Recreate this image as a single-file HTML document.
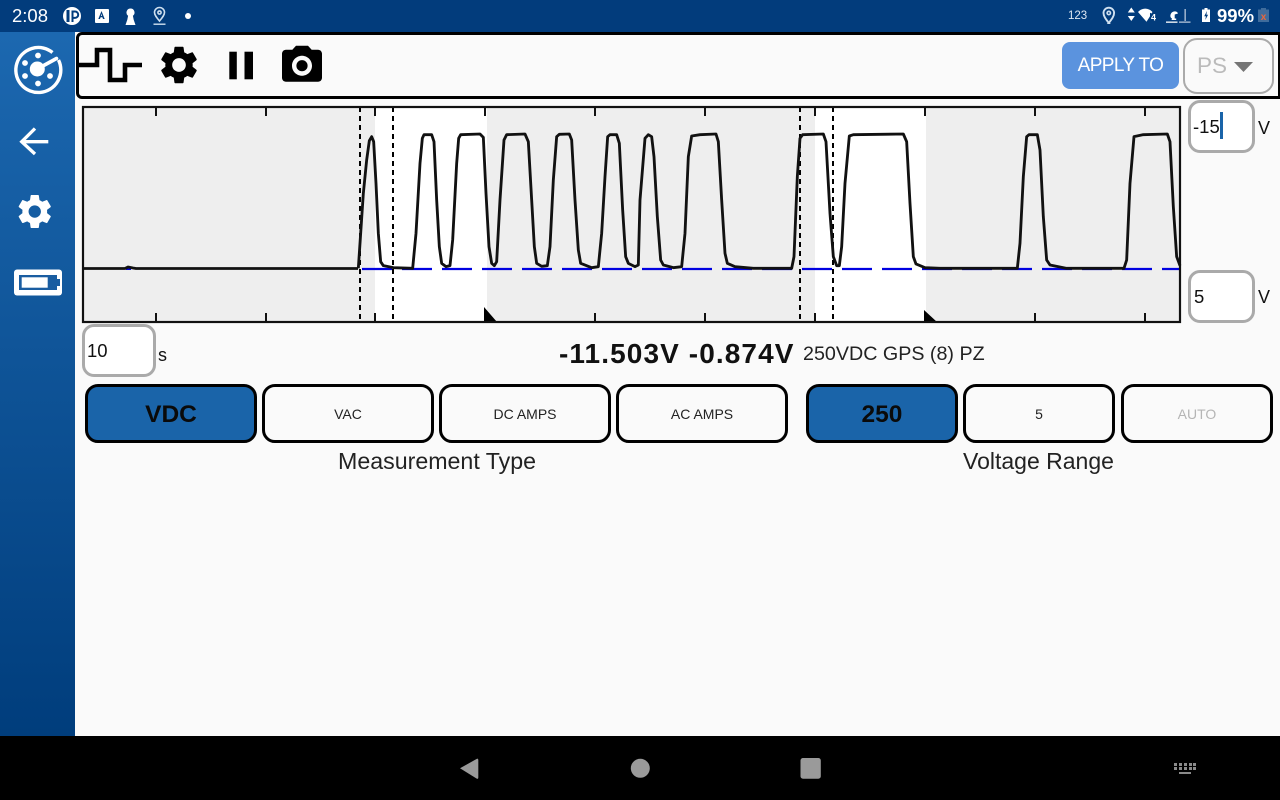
<!DOCTYPE html>
<html><head><meta charset="utf-8"><style>
html,body{margin:0;padding:0;width:1280px;height:800px;overflow:hidden;background:#fafafa}
body{position:relative;font-family:"Liberation Sans",sans-serif;color:#111}
.a{position:absolute;box-sizing:border-box}
.t{position:absolute;white-space:nowrap;line-height:30px;height:30px}
.b{position:absolute;box-sizing:border-box;top:384px;height:59px;border:3px solid #000;border-radius:13px;background:#fafafa;text-align:center;line-height:54px;font-size:14px;color:#222}
.on{background:#1a64a9;font-weight:bold;font-size:24.500px;line-height:55px;color:#0a0a0a}
.i{position:absolute;box-sizing:border-box;background:#fff;border:3px solid #aaa;border-radius:12px}
svg{position:absolute;left:0;top:0}
</style></head><body>
<div class="a" style="left:0;top:0;width:1280px;height:32px;background:#023c7c"></div>
<div class="a" style="left:0;top:32px;width:75px;height:704px;background:linear-gradient(#1c68b0,#003d7c)"></div>
<div class="a" style="left:0;top:736px;width:1280px;height:64px;background:#000"></div>
<div class="a" style="left:76px;top:32px;width:1204px;height:67px;border:3px solid #000;border-right-width:2px;border-radius:6px 0 0 6px;background:#fafafa"></div>
<div class="a" style="left:1062px;top:42px;width:117px;height:47px;background:#5b93de;border-radius:8px;color:#fff;font-size:19px;line-height:48px;text-align:center;letter-spacing:-.6px">APPLY TO</div>
<div class="a" style="left:1183px;top:38px;width:91px;height:56px;border:2.500px solid #aaa;border-radius:14px"></div>
<div class="t" style="left:1197px;top:51px;font-size:22.500px;color:#bbb">PS</div>

<div class="a" style="left:82px;top:106px;width:1099px;height:217px;background:#eee"></div>
<div class="a" style="left:375px;top:106px;width:112px;height:217px;background:#fff"></div>
<div class="a" style="left:815px;top:106px;width:111px;height:217px;background:#fff"></div>

<svg width="1280" height="800" viewBox="0 0 1280 800">
<!-- status bar -->
<g fill="#fff">
<circle cx="72" cy="16" r="9"/>
<rect x="66.500" y="10" width="3" height="12" fill="#023c7c"/><path d="M72.500 22V11.500h2.500a3.200 3.200 0 0 1 0 6.400H72.500" fill="none" stroke="#023c7c" stroke-width="2"/>
<rect x="95" y="9" width="14" height="14" rx="1"/>
<path d="M101.500 11l-3.200 8h1.700l.6-1.700h1.800l.6 1.700h1.700l-3.200-8zm0 2.800l.6 2.100h-1.200z" fill="#023c7c"/>
<path d="M130.500 8.500a4 4 0 0 1 2.400 7.200l.8 4 1.800 5.300h-10l1.800-5.300.8-4a4 4 0 0 1 2.400-7.200z"/>
<circle cx="188" cy="16" r="3"/>
</g>
<g fill="none" stroke="#cfe0f0" stroke-width="1.600">
<path d="M159.500 21c-3-3.500-5-6-5-8.500a5 5 0 0 1 10 0c0 2.500-2 5-5 8.500z"/><circle cx="159.500" cy="12.500" r="1.600"/><path d="M153.500 24.200h12" stroke-width="1.400"/>
<path d="M1108.800 23c-3.300-4.300-5.300-7-5.300-10a5.300 5.300 0 0 1 10.600 0c0 3-2 5.700-5.300 10z" stroke-width="1.900"/><circle cx="1108.800" cy="13" r="1.700"/>
</g>
<g fill="#fff">
<path d="M1131.300 7.500l3.500 5h-7zM1131.300 21l-3.500-5h7z"/>
<path d="M1138 12c4-4.500 10.500-4.500 14.500 0l-1 1.500-1.500-.8v3.500l-3.500 5.500z"/>
<text x="1151" y="20.500" font-size="9" font-weight="bold" font-family="Liberation Sans">4</text>
<path d="M1172 18.500c-2.500-1-2-5 .5-6.500 2.500-1.300 5-.5 5.500 1.500l-3.300 1v4h1.500v1.500h-4.700z"/>
<path d="M1166 21.500h11.500v1.300H1166z"/>
<path d="M1184.500 9h1.300v12h-1.300zM1179 21.500h11.500v1.200H1179z" fill="#b9c9dc"/>
<path d="M1202 9.500h2.500V8h3v1.500h2.500V22h-8z"/>
</g>
<path d="M1207 11l-2.800 5.300h1.700l-.6 3.700 2.800-5.300h-1.700z" fill="#023c7c"/>
<rect x="1258" y="9.500" width="11" height="12.500" fill="#3f6c9c"/><rect x="1261" y="8" width="5" height="2" fill="#3f6c9c"/>
<text x="1260.800" y="20" font-size="10" font-weight="bold" fill="#e8673c" font-family="Liberation Sans">x</text>

<!-- sidebar logo -->
<g fill="#fff" stroke="none">
<path d="M52.500 52.500A22.500 22.500 0 1 0 58.500 60" fill="none" stroke="#fff" stroke-width="3.400"/>
<circle cx="37.300" cy="69" r="7.500"/>
<path d="M37.300 69L56.500 58.500" stroke="#fff" stroke-width="3.600" stroke-linecap="round"/>
<circle cx="38" cy="55.500" r="2.900"/><circle cx="25" cy="63" r="2.900"/><circle cx="25" cy="76" r="2.900"/><circle cx="38" cy="83.500" r="2.900"/><circle cx="50" cy="76" r="2.900"/>
</g>
<path d="M48.300 141.700H22.500M35 128.500L21.700 141.700 35 154" fill="none" stroke="#fff" stroke-width="3.300"/>
<path transform="translate(14.100 190.900) scale(1.720)" fill="#fff" d="M19.140 12.940c.04-.3.06-.61.06-.94 0-.32-.02-.64-.07-.94l2.030-1.580c.18-.14.23-.41.12-.61l-1.920-3.320c-.12-.22-.37-.29-.59-.22l-2.390.96c-.5-.38-1.030-.7-1.620-.94l-.36-2.540c-.04-.24-.24-.41-.48-.41h-3.840c-.24 0-.43.17-.47.41l-.36 2.540c-.59.24-1.130.57-1.620.94l-2.390-.96c-.22-.08-.47 0-.59.22L2.740 8.870c-.12.21-.08.47.12.61l2.030 1.580c-.05.3-.09.63-.09.94s.02.64.07.94l-2.030 1.580c-.18.14-.23.41-.12.61l1.920 3.320c.12.22.37.29.59.22l2.390-.96c.5.38 1.030.7 1.620.94l.36 2.540c.05.24.24.41.48.41h3.840c.24 0 .44-.17.47-.41l.36-2.540c.59-.24 1.130-.56 1.620-.94l2.390.96c.22.08.47 0 .59-.22l1.920-3.320c.12-.22.07-.47-.12-.61l-2.010-1.580zM12 15.600c-1.980 0-3.600-1.620-3.600-3.600s1.620-3.600 3.600-3.600 3.600 1.620 3.600 3.600-1.620 3.600-3.600 3.600z"/>
<rect x="14" y="269.500" width="48" height="26" rx="3" fill="#fff"/>
<rect x="19" y="275" width="38" height="15" fill="#1a5da1"/>
<rect x="21.700" y="277.300" width="26" height="10.400" fill="#fff"/>
<rect x="57" y="279" width="3" height="7" fill="#1a5da1"/>

<!-- toolbar icons -->
<path d="M77 65H97V50H110V80H125V65H142" fill="none" stroke="#000" stroke-width="4.600"/>
<path transform="translate(156.200 42.200) scale(1.900)" fill="#000" d="M19.140 12.940c.04-.3.06-.61.06-.94 0-.32-.02-.64-.07-.94l2.030-1.580c.18-.14.23-.41.12-.61l-1.920-3.320c-.12-.22-.37-.29-.59-.22l-2.390.96c-.5-.38-1.030-.7-1.620-.94l-.36-2.540c-.04-.24-.24-.41-.48-.41h-3.840c-.24 0-.43.17-.47.41l-.36 2.540c-.59.24-1.130.57-1.620.94l-2.390-.96c-.22-.08-.47 0-.59.22L2.740 8.870c-.12.21-.08.47.12.61l2.030 1.580c-.05.3-.09.63-.09.94s.02.64.07.94l-2.030 1.580c-.18.14-.23.41-.12.61l1.920 3.320c.12.22.37.29.59.22l2.390-.96c.5.38 1.030.7 1.620.94l.36 2.540c.05.24.24.41.48.41h3.840c.24 0 .44-.17.47-.41l.36-2.540c.59-.24 1.130-.56 1.620-.94l2.390.96c.22.08.47 0 .59-.22l1.920-3.320c.12-.22.07-.47-.12-.61l-2.010-1.580zM12 15.600c-1.980 0-3.600-1.620-3.600-3.600s1.620-3.600 3.600-3.600 3.600 1.620 3.600 3.600-1.620 3.600-3.600 3.600z"/>
<rect x="229.300" y="51.700" width="7.500" height="27.600" fill="#000"/><rect x="244.500" y="51.700" width="8.500" height="27.600" fill="#000"/>
<g transform="translate(278 41.700) scale(2)" fill="#000"><circle cx="12" cy="12" r="2.800"/><path d="M9 2L7.170 4H4c-1.100 0-2 .9-2 2v12c0 1.100.9 2 2 2h16c1.100 0 2-.9 2-2V6c0-1.100-.9-2-2-2h-3.170L15 2H9zm3 15c-2.760 0-5-2.240-5-5s2.240-5 5-5 5 2.240 5 5-2.240 5-5 5z"/></g>
<path d="M1234 62h19l-9.500 10z" fill="#757575"/>

<!-- chart -->
<path d="M362 269H1180" stroke="#0000e0" stroke-width="2.200" stroke-dasharray="30 10" fill="none"/>
<path d="M126 269H131" stroke="#0000e0" stroke-width="2"/>
<g stroke="#111" stroke-width="2" fill="none">
<path d="M156 107v9M266 107v9M375 107v9M485 107v9M595 107v9M705 107v9M815 107v9M925 107v9M1035 107v9M1145 107v9M156 322v-9M266 322v-9M375 322v-9M485 322v-9M595 322v-9M705 322v-9M815 322v-9M925 322v-9M1035 322v-9M1145 322v-9"/>
<path d="M360 107V322M393 107V322M800 107V322M833 107V322" stroke="#000" stroke-dasharray="5 4"/>
</g>
<path d="M484 307V322H497zM924 310V322H937z" fill="#000"/>
<g fill="none" stroke="#111" stroke-linejoin="round">
<path stroke-width="2.800" d="M83 268.500H125L128 267 133 268 136 268.500H358"/>
<g transform="translate(340 100) scale(.33333)" stroke-width="8.500">
<path d="M55 505L62 400 70 280 80 180 88 122 95 110 101 125 108 250 115 400 122 485 130 497 160 503 218 505 228 400 240 190 247 115 252 104 275 104 282 125 290 300 298 440 305 490 318 500 330 497 338 420 350 190 356 115 362 104 420 102 430 112 438 280 447 440 455 490 463 497 470 485 480 300 492 120 500 104 555 102 565 125 575 300 583 440 590 490 605 499 622 497 630 440 640 240 650 110 658 103 688 102 695 120 705 300 715 450 722 490 755 503 775 500 785 400 795 230 803 110 810 104 830 104 838 130 848 330 857 470 865 490 885 500 895 495 900 300 915 115 925 104 935 110 942 170 952 350 962 480 970 495 1000 503 1025 500 1035 400 1045 170 1055 108 1080 104 1128 102 1135 125 1145 300 1155 460 1162 490 1185 500 1240 505 1355 505 1362 470 1372 230 1380 115 1388 104 1450 102 1458 125 1470 340 1480 470 1490 497 1498 497 1505 440 1515 250 1528 108 1540 104 1690 102 1700 125 1710 310 1720 470 1728 492 1755 503 1800 505 1820 505 2032 505 2040 430 2050 230 2060 110 2067 104 2092 104 2100 150 2110 350 2120 480 2130 495 2180 505 2352 505 2360 480 2370 250 2382 110 2410 104 2482 102 2490 125 2500 320 2510 470 2520 497"/>
</g>
</g>
<rect x="83" y="107" width="1097" height="215" fill="none" stroke="#111" stroke-width="2.200"/>

<!-- nav -->
<g fill="#9a9a9a">
<path d="M460 768.300L476.500 759Q478.300 758 478.300 760V777.500Q478.300 779.500 476.500 778.500z"/>
<circle cx="640.300" cy="768.300" r="9.500"/>
<rect x="800.500" y="758" width="20.300" height="20.700" rx="2.500"/>
<g fill="#8a8a8a"><rect x="1174" y="763" width="3" height="3"/><rect x="1179" y="763" width="3" height="3"/><rect x="1184" y="763" width="3" height="3"/><rect x="1189" y="763" width="3" height="3"/><rect x="1193" y="763" width="3" height="3"/>
<rect x="1174" y="767" width="3" height="3"/><rect x="1179" y="767" width="3" height="3"/><rect x="1184" y="767" width="3" height="3"/><rect x="1189" y="767" width="3" height="3"/><rect x="1193" y="767" width="3" height="3"/>
<rect x="1179" y="772" width="12" height="2"/></g>
</g>
</svg>

<div class="t" style="left:12px;top:1px;font-size:18.500px;color:#fff">2:08</div>
<div class="t" style="left:1068px;top:1px;font-size:11.500px;color:#dfe8f2">123</div>
<div class="t" style="left:1217px;top:1px;font-size:18.500px;color:#fff;font-weight:bold">99%</div>

<div class="i" style="left:1188px;top:100px;width:67px;height:53px"></div>
<div class="i" style="left:1188px;top:270px;width:67px;height:53px"></div>
<div class="i" style="left:82px;top:324px;width:74px;height:53px"></div>
<div class="a" style="left:1219.500px;top:112px;width:3px;height:27px;background:#1a64a9"></div>
<div class="t" style="left:1193px;top:112px;font-size:18.500px">-15</div>
<div class="t" style="left:1194px;top:282px;font-size:18.500px">5</div>
<div class="t" style="left:87px;top:336px;font-size:18.500px">10</div>
<div class="t" style="left:1258px;top:113px;font-size:18px">V</div>
<div class="t" style="left:1258px;top:282px;font-size:18px">V</div>
<div class="t" style="left:158px;top:340px;font-size:18px">s</div>

<div class="t" style="left:559px;top:339px;font-size:28px;font-weight:bold;color:#111;letter-spacing:1.100px">-11.503V -0.874V</div>
<div class="t" style="left:803px;top:339px;font-size:19.700px;color:#222">250VDC GPS (8) PZ</div>

<div class="b on" style="left:85px;width:172px">VDC</div>
<div class="b" style="left:262px;width:172px">VAC</div>
<div class="b" style="left:439px;width:172px">DC AMPS</div>
<div class="b" style="left:616px;width:172px">AC AMPS</div>
<div class="b on" style="left:806px;width:152px">250</div>
<div class="b" style="left:963px;width:152px">5</div>
<div class="b" style="left:1121px;width:152px;color:#b5b5b5">AUTO</div>

<div class="t" style="left:338px;top:446px;font-size:23.200px;color:#222">Measurement Type</div>
<div class="t" style="left:963px;top:446px;font-size:23px;color:#222">Voltage Range</div>
</body></html>
